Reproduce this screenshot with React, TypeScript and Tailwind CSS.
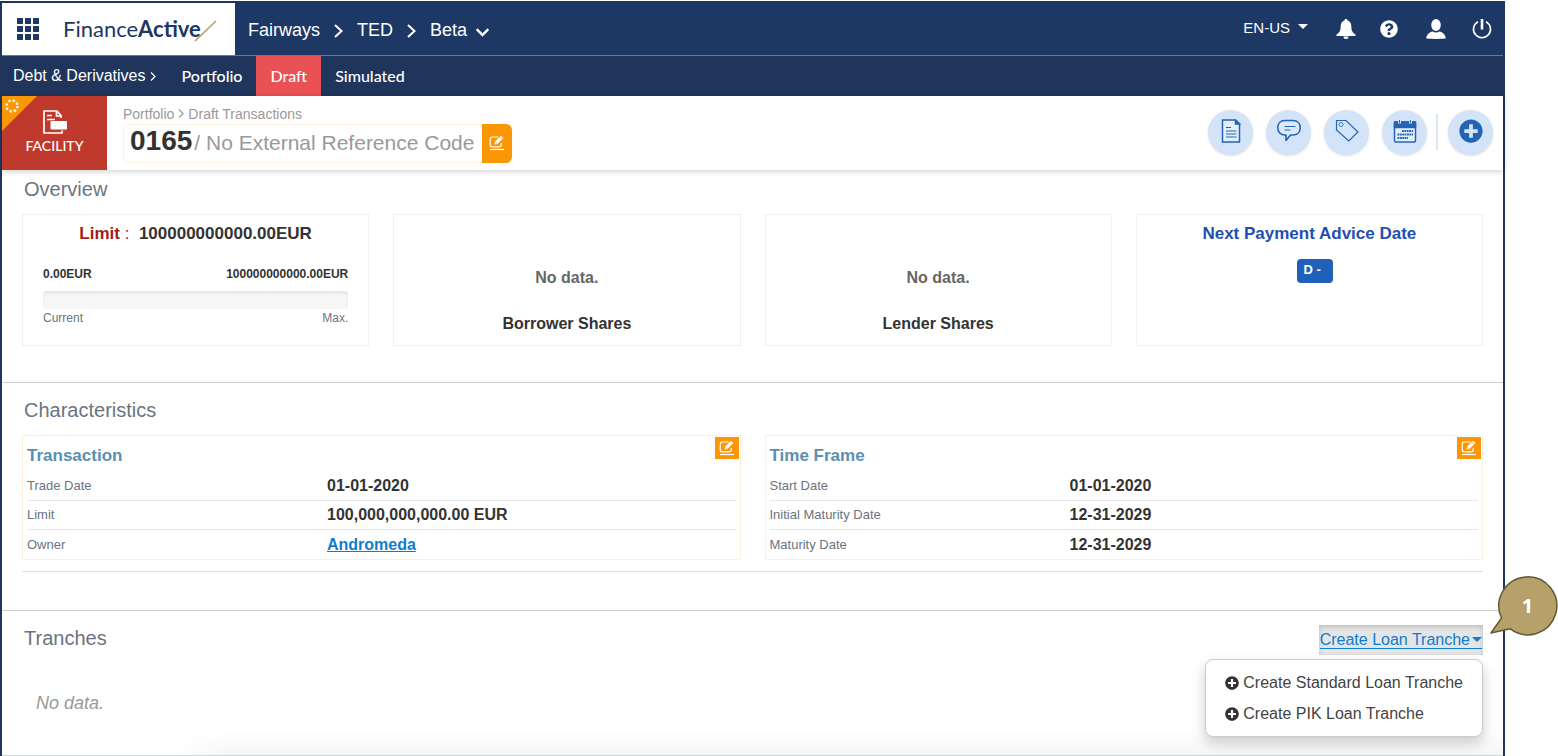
import React, { useState } from 'react'
import { FaChevronDown, FaPlusCircle, FaQuestionCircle } from 'react-icons/fa'

const transaction = [
  { label: 'Trade Date', value: '01-01-2020' },
  { label: 'Limit', value: '100,000,000,000.00 EUR' },
  { label: 'Owner', value: 'Andromeda', link: true },
]

const timeFrame = [
  { label: 'Start Date', value: '01-01-2020' },
  { label: 'Initial Maturity Date', value: '12-31-2029' },
  { label: 'Maturity Date', value: '12-31-2029' },
]

function GridIcon() {
  return (
    <svg width="22" height="22" viewBox="0 0 22 22" fill="#1d3865">
      {[0, 8, 16].map((y) => [0, 8, 16].map((x) => <rect key={`${x}-${y}`} x={x} y={y} width="6" height="6" />))}
    </svg>
  )
}

function Chevron() {
  return (
    <svg width="9" height="14" viewBox="0 0 9 14" fill="none" stroke="white" strokeWidth="2">
      <path d="M1 1l6.5 6L1 13" />
    </svg>
  )
}

function SmallChevron() {
  return (
    <svg width="6" height="9" viewBox="0 0 6 9" fill="none" stroke="currentColor" strokeWidth="1.200">
      <path d="M1 .5l4 4-4 4" />
    </svg>
  )
}

function Caret({ className }: { className?: string }) {
  return (
    <svg width="10" height="5" viewBox="0 0 10 5" fill="currentColor" className={className}>
      <path d="M0 0h10L5 5z" />
    </svg>
  )
}

function BellIcon() {
  return (
    <svg width="20" height="20" viewBox="0 0 20 20" fill="currentColor">
      <path d="M10 0c1 0 1.6.7 1.6 1.6C14 2.3 15.2 4.300 15.300 7c.1 4.500.9 6.500 4.200 8.500V17H.5v-1.500C3.800 13.500 4.600 11.500 4.700 7 4.800 4.300 6 2.300 8.400 1.600 8.400.7 9 0 10 0z" />
      <path d="M7.500 17.500h5A2.500 2.500 0 0110 20a2.500 2.500 0 01-2.500-2.500z" />
    </svg>
  )
}

function UserIcon() {
  return (
    <svg width="20" height="20" viewBox="0 0 20 20" fill="currentColor">
      <ellipse cx="10" cy="6" rx="4.800" ry="6" />
      <path d="M.3 19.500c.2-4 3-6.200 6.500-7 1.800 1.300 4.600 1.300 6.400 0 3.500.8 6.300 3 6.500 7-6 .6-13.400.6-19.400 0z" />
    </svg>
  )
}

function PowerIcon() {
  return (
    <svg width="20" height="20" viewBox="0 0 20 20" fill="none" stroke="currentColor">
      <path d="M6 2.700a8.500 8.500 0 108 0" strokeWidth="1.600" />
      <path d="M10 0v10.500" strokeWidth="2.600" />
    </svg>
  )
}

function EditIcon() {
  return (
    <svg width="16" height="16" viewBox="0 0 16 16" fill="none" stroke="white">
      <path d="M9.500 2H3.500a2.300 2.300 0 00-2.300 2.300v5.200a2.300 2.300 0 002.300 2.300h6.500a2.300 2.300 0 002.300-2.300V8" strokeWidth="1.200" />
      <path d="M5.500 9.500l.7-3L12 .8l2.400 2.300-5.900 5.800z" fill="white" stroke="none" />
      <path d="M6.500 7.200l1.500 1.400M11 2.200l2 2" stroke="#fb9605" strokeWidth=".7" />
      <path d="M1 14.500h14" strokeWidth="1.200" />
    </svg>
  )
}

function FacilityIcon() {
  return (
    <svg width="24" height="24" viewBox="0 0 24 24" fill="none" stroke="white" strokeWidth="1.700">
      <path d="M18 8V5.500L14 1H1v22h18v-2.500" />
      <path d="M13.500 1v5H18M4 5.500h5M4 9.500h8" />
      <rect x="7.500" y="11" width="16.500" height="8.500" rx="1" fill="white" stroke="none" />
    </svg>
  )
}

function DocIcon() {
  return (
    <svg width="24" height="24" viewBox="0 0 24 24" fill="none" stroke="#2464b4" strokeWidth="1.500">
      <path d="M3.500 1h13l4 4v18h-17z" fill="#e3effb" />
      <path d="M16.500 1v4h4z" fill="#2464b4" />
      <path d="M7 8.500h5M7 12h10.500M7 15h10.500M7 18h10.500" strokeWidth="1" />
    </svg>
  )
}

function CommentIcon() {
  return (
    <svg width="24" height="24" viewBox="0 0 24 24" fill="none" stroke="#2464b4" strokeWidth="1.600">
      <path d="M8 1.500h8c4.500 0 7.200 3 7.200 7.200s-2.700 7.300-7.200 7.300h-2.500L9 21.500V16H8C3.500 16 .8 13 .8 8.700S3.500 1.500 8 1.500z" fill="#dce9fa" strokeLinejoin="round" />
      <path d="M7.500 7.500h11M7.500 11h6" strokeWidth="1" />
    </svg>
  )
}

function TagIcon() {
  return (
    <svg width="24" height="24" viewBox="0 0 24 24" fill="none" stroke="#2464b4" strokeWidth="1.200">
      <path d="M1.500 1.500H11L23 13l-9.200 9L1.500 11z" />
      <circle cx="6" cy="5.500" r="2" strokeWidth=".8" />
    </svg>
  )
}

function CalendarIcon() {
  return (
    <svg width="24" height="24" viewBox="0 0 24 24" fill="none" stroke="#2464b4" strokeWidth="1.500">
      <rect x="1.500" y="3" width="21" height="20" rx="1.500" fill="#e3effb" />
      <path d="M1.500 3h21v5.500h-21z" fill="#2464b4" />
      <path d="M6.500 0v4.500M17.500 0v4.500" stroke="#d5e4f8" strokeWidth="3" />
      <path d="M6.500 1v3M17.500 1v3" strokeWidth="1" />
      <path d="M9 12h11M4.500 15.500H20M4.500 19H15" strokeWidth="1.800" strokeDasharray="1.800 .6" />
    </svg>
  )
}

function RoundButton({ label, children }: { label: string; children: React.ReactNode }) {
  return (
    <button aria-label={label} className="flex size-[45px] cursor-pointer items-center justify-center rounded-full bg-[#d4e4f8] pb-0.5 shadow-sm">
      {children}
    </button>
  )
}

function OverviewCard({ children }: { children: React.ReactNode }) {
  return <div className="flex min-h-[132px] flex-col border border-[#f0f0f0] px-5 pt-2">{children}</div>
}

function SharesCard({ title }: { title: string }) {
  return (
    <OverviewCard>
      <p className="mt-auto text-center text-[16px] leading-6 font-bold text-[#666]">No data.</p>
      <h3 className="mt-[22px] mb-[9px] text-center text-[16px] leading-6 font-bold">{title}</h3>
    </OverviewCard>
  )
}

function SectionTitle({ children }: { children: React.ReactNode }) {
  return <h2 className="mb-1.5 pl-0.5 text-[20px] leading-[38px] text-[#6b7480]">{children}</h2>
}

function DetailCard({ title, rows }: { title: string; rows: { label: string; value: string; link?: boolean }[] }) {
  return (
    <div className="border border-[#fdf0dc]">
      <div className="flex items-start justify-between pt-px pr-px pl-1">
        <h3 className="pt-[3px] text-[17px] leading-8 font-bold text-[#5b8fb0]">{title}</h3>
        <button aria-label={`Edit ${title}`} className="flex h-[22px] w-6 cursor-pointer items-center justify-center bg-[#fb9605]">
          <EditIcon />
        </button>
      </div>
      <dl className="mr-1 ml-1">
        {rows.map((row) => (
          <div key={row.label} className="flex h-[29px] items-center border-b border-[#e6e7e9] last:border-b-0">
            <dt className="w-[300px] text-[13px] text-[#6b7480]">{row.label}</dt>
            <dd className="text-[16px] font-bold text-[#333]">
              {row.link ? <a href="#" className="text-[#0b7dd3] underline">{row.value}</a> : row.value}
            </dd>
          </div>
        ))}
      </dl>
    </div>
  )
}

function App() {
  const [menuOpen, setMenuOpen] = useState(true)

  return (
    <div className="min-h-screen bg-white pt-px pr-[53px] font-['Liberation_Sans',Arial,sans-serif]">
      <div className="border-x-2 border-t border-[#1f355b]">
        <header className="flex h-[54px] items-center border-b border-[#c94f58] bg-[#1d3865] text-white">
          <div className="flex h-full w-[233px] items-center gap-6 border-t border-[#1f355b] bg-white pl-[15px]">
            <button aria-label="Applications" className="cursor-pointer">
              <GridIcon />
            </button>
            <a href="#" className="relative font-['Lato',sans-serif] text-[22px] leading-[30px] text-[#1d3865]">
              Finance<b className="font-bold">Active</b>
              <svg width="23" height="22" viewBox="0 0 23 22" className="absolute top-1.5 -right-4">
                <path d="M1 21L22 1" stroke="#b3a06c" strokeWidth="1.700" />
              </svg>
            </a>
          </div>
          <nav className="flex items-center gap-[14px] pt-1 pl-[13px] text-[18px]">
            <a href="#">Fairways</a>
            <Chevron />
            <a href="#">TED</a>
            <Chevron />
            <button className="flex cursor-pointer items-center gap-2">
              Beta <FaChevronDown size={15} className="mt-1" />
            </button>
          </nav>
          <div className="ml-auto flex items-center pr-[11px]">
            <button className="mr-7 flex cursor-pointer items-center gap-2 text-[15px]">
              EN-US <Caret className="mb-1" />
            </button>
            <div className="flex items-center gap-6">
              <button aria-label="Notifications" className="cursor-pointer"><BellIcon /></button>
              <button aria-label="Help" className="mr-1 cursor-pointer"><FaQuestionCircle size={18} /></button>
              <button aria-label="Account" className="mr-0.5 cursor-pointer"><UserIcon /></button>
              <button aria-label="Log out" className="cursor-pointer"><PowerIcon /></button>
            </div>
          </div>
        </header>

        <nav className="flex h-10 items-center bg-[#1f355b] pl-[11px] font-['Lato',sans-serif] text-[16px] font-medium text-white">
          <a href="#" className="mr-3 flex items-center gap-1 font-['Liberation_Sans',Arial,sans-serif] text-[16px] font-normal">
            Debt &amp; Derivatives <SmallChevron />
          </a>
          <a href="#" className="px-[14px]">Portfolio</a>
          <a href="#" className="flex h-full items-center bg-[#ea5154] px-[14px]">Draft</a>
          <a href="#" className="px-[14px]">Simulated</a>
        </nav>

        <div className="relative flex h-[74px] items-center bg-white shadow-[0_1px_6px_rgba(0,0,0,0.22)]">
          <div className="relative flex h-full w-[105px] flex-col items-center justify-center gap-0.5 bg-[#c0392d] font-['Lato',sans-serif] text-[14px] leading-5 font-medium text-white">
            <svg width="35" height="35" viewBox="0 0 35 35" className="absolute top-0 left-0">
              <path d="M0 0h35L0 35z" fill="#fb9605" />
              <circle cx="10" cy="10" r="5.500" fill="none" stroke="white" strokeWidth="2.400" strokeDasharray="2.200 2.120" />
            </svg>
            <FacilityIcon />
            FACILITY
          </div>
          <div className="ml-4">
            <p className="flex items-center gap-1 text-[14px] leading-5 text-[#999]">
              <a href="#">Portfolio</a> <SmallChevron /> <a href="#">Draft Transactions</a>
            </p>
            <div className="flex h-[39px] items-stretch rounded-md border border-[#fdf3e0] bg-white">
              <h1 className="flex items-baseline pr-2 pl-1.5 text-[21px] leading-8 whitespace-pre text-[#999]">
                <b className="pr-0.5 text-[28px] leading-8 text-[#333]">0165</b>/ No External Reference Code
              </h1>
              <button aria-label="Edit reference" className="-my-px -mr-px flex w-[30px] cursor-pointer items-center justify-center rounded-r-md bg-[#fb9605]">
                <EditIcon />
              </button>
            </div>
          </div>
          <div className="ml-auto flex items-center gap-[13px] pr-2.5 pb-0.5">
            <RoundButton label="Documents"><DocIcon /></RoundButton>
            <RoundButton label="Comments"><CommentIcon /></RoundButton>
            <RoundButton label="Tags"><TagIcon /></RoundButton>
            <RoundButton label="Calendar"><CalendarIcon /></RoundButton>
            <div className="-ml-1 flex h-9 items-center border-l-2 border-[#dce6f2] pl-2.5">
              <RoundButton label="Add"><FaPlusCircle size={24} color="#2464b4" /></RoundButton>
            </div>
          </div>
        </div>

        <main>
          <section className="border-b border-[#cfcfcf] px-5 pb-9">
            <SectionTitle>Overview</SectionTitle>
            <div className="grid grid-cols-4 gap-6 text-[#333]">
              <OverviewCard>
                <h3 className="text-center text-[17px] leading-[22px] font-bold">
                  <span className="text-[#a31c14]">Limit <span className="font-normal">:</span></span>&nbsp; 100000000000.00EUR
                </h3>
                <div className="mt-5 mb-2 flex justify-between text-[12px] leading-[18px] font-bold">
                  <span>0.00EUR</span>
                  <span>100000000000.00EUR</span>
                </div>
                <div role="progressbar" aria-label="Limit" aria-valuenow={0} className="h-[18px] rounded-sm bg-[#f6f6f6] shadow-[inset_0_2px_3px_rgba(0,0,0,0.08)]" />
                <div className="flex justify-between text-[12px] leading-[18px] text-[#6b7480]">
                  <span>Current</span>
                  <span>Max.</span>
                </div>
              </OverviewCard>
              <SharesCard title="Borrower Shares" />
              <SharesCard title="Lender Shares" />
              <OverviewCard>
                <h3 className="text-center text-[17px] leading-[22px] font-bold text-[#1f4fb0]">Next Payment Advice Date</h3>
                <span className="mt-[14px] ml-3 h-6 w-9 self-center rounded bg-[#2160b8] pl-1.5 text-[13px] leading-[22px] font-bold text-white">D -</span>
              </OverviewCard>
            </div>
          </section>

          <section className="border-b border-[#cfcfcf] px-5 pt-2 pb-[38px]">
            <SectionTitle>Characteristics</SectionTitle>
            <div className="grid grid-cols-2 gap-6 border-b border-[#dedfe1] pb-[11px]">
              <DetailCard title="Transaction" rows={transaction} />
              <DetailCard title="Time Frame" rows={timeFrame} />
            </div>
          </section>

          <section className="relative border-b border-[#d3d6dc] px-5 pt-2 pb-[38px]">
            <div className="absolute right-0 bottom-0 left-[170px] h-6 bg-linear-to-t from-[#f5f5f5] to-white [mask-image:linear-gradient(to_right,transparent,black_60px)]" />
            <div className="flex items-start justify-between">
              <SectionTitle>Tranches</SectionTitle>
              <div className="relative mt-1.5">
                <button
                  aria-expanded={menuOpen}
                  onClick={() => setMenuOpen(!menuOpen)}
                  className="flex h-[30px] cursor-pointer items-center bg-[#e5e5e5] px-px text-[16px] text-[#0b7dd3] shadow-[inset_0_2px_5px_rgba(0,0,0,0.18)]"
                >
                  <span className="flex items-center gap-0.5 border-b border-[#0b7dd3] leading-4">Create Loan Tranche <Caret /></span>
                </button>
                {menuOpen && (
                  <div className="absolute top-full right-0 z-10 mt-1 rounded-lg border border-[#ccc] bg-white px-[19px] py-[7px] text-[16px] leading-[31px] whitespace-nowrap text-[#444] shadow-[0_6px_14px_rgba(0,0,0,0.2)]">
                    <button className="flex cursor-pointer items-center gap-1"><FaPlusCircle size={14} color="#333" /> Create Standard Loan Tranche</button>
                    <button className="flex cursor-pointer items-center gap-1"><FaPlusCircle size={14} color="#333" /> Create PIK Loan Tranche</button>
                  </div>
                )}
              </div>
            </div>
            <p className="mt-[26px] pl-3.5 text-[18px] leading-7 text-[#999] italic">No data.</p>

            <div className="absolute -top-9 -right-[55px] z-20 h-[62px] w-[68px]">
              <svg width="68" height="62" viewBox="0 0 68 62">
                <path d="M11.500 43A29 29 0 1120 53.700L1 58z" fill="#b5a169" stroke="#655832" strokeWidth="1.500" strokeLinejoin="round" />
              </svg>
              <span className="absolute inset-0 pl-[7px] text-center font-['Open_Sans',sans-serif] text-[20px] leading-[62px] font-bold text-white">1</span>
            </div>
          </section>
        </main>
      </div>
    </div>
  )
}

export default App
